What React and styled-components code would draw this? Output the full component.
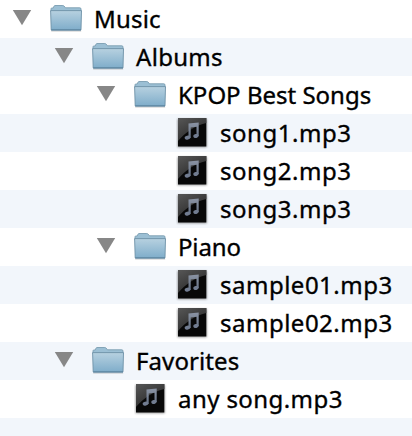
import React from "react";
import styled, { createGlobalStyle } from "styled-components";

const GlobalStyle = createGlobalStyle`
  body { margin: 0; background: #fff; overflow: hidden; }
`;

const Tree = styled.div`
  width: 412px;
  height: 436px;
  overflow: hidden;
  display: flex;
  flex-direction: column;
  font: 24px/38px "Noto Sans", sans-serif;
  color: #000;
`;

const Row = styled.div`
  display: flex;
  align-items: center;
  flex: 0 0 38px;
  box-sizing: border-box;
  padding-left: ${(p) => 12 + p.$depth * 42}px;
  background: #fff;
  &:nth-child(even) { background: #f2f6fb; }
`;

const Toggle = styled.div`
  display: flex;
  width: 38px;
  height: 38px;
`;

const IconSlot = styled.div`
  display: flex;
  width: 44px;
  height: 38px;
`;

const Label = styled.span`
  white-space: pre;
  height: 38px;
  letter-spacing: ${(p) => p.$spacing}px;
  -webkit-text-stroke: 0.35px #000;
`;

const Triangle = () => (
  <svg width="20" height="38" viewBox="0 0 20 38">
    <path d="M.8 10H19.2L10 25.3Z" fill="#878787" />
  </svg>
);

const Folder = () => (
  <svg width="34" height="38" viewBox="0 0 34 38">
    <defs>
      <linearGradient id="folderFront" x1="0" y1="0" x2="0" y2="1">
        <stop offset="0" stopColor="#b7d1e0" />
        <stop offset="1" stopColor="#7fadca" />
      </linearGradient>
    </defs>
    <path d="M1.2 31H31.2" stroke="#000" strokeOpacity=".22" />
    <path d="M1 11V8.7Q1 8 2 8H3.2L4.2 5.9Q4.5 5.5 5 5.5H12.8Q13.5 5.5 14 6L15.5 7.8H29.8Q31 7.8 31 9V12H1Z" fill="#9bbfd4" stroke="#7b9db1" strokeWidth=".9" />
    <path d="M.6 10.6H31.5L31 29.9H1.2Z" fill="url(#folderFront)" stroke="#6d91a7" strokeWidth=".9" />
    <path d="M1.2 30H31" stroke="#557f9b" />
  </svg>
);

const MusicFile = () => (
  <svg width="34" height="38" viewBox="0 0 34 38">
    <defs>
      <linearGradient id="gloss" x1="0" y1="0" x2=".7" y2="1">
        <stop offset="0" stopColor="#575757" />
        <stop offset="1" stopColor="#262626" />
      </linearGradient>
      <linearGradient id="note" x1="0" y1="0" x2="0" y2="1">
        <stop offset="0" stopColor="#8b94a4" />
        <stop offset="1" stopColor="#667184" />
      </linearGradient>
      <filter id="soft"><feGaussianBlur stdDeviation=".8" /></filter>
      <filter id="noteSoft"><feGaussianBlur stdDeviation=".35" /></filter>
    </defs>
    <rect x="1.5" y="5" width="29.3" height="28.3" fill="#000" opacity=".4" filter="url(#soft)" />
    <rect x="2" y="4" width="28.3" height="28.5" fill="#080808" />
    <path d="M2 4H30.3V9C18 12 10 18 2 27Z" fill="url(#gloss)" />
    <g filter="url(#noteSoft)">
      <path d="M12.5 9.6L22.7 8.4V22H20.5V12.8L14.7 13.6V24H12.5Z" fill="url(#note)" />
      <ellipse cx="11.5" cy="23.6" rx="2.9" ry="2" fill="#717c90" transform="rotate(-15 11.5 23.6)" />
      <ellipse cx="20" cy="22" rx="2.7" ry="2" fill="#717c90" transform="rotate(-15 20 22)" />
    </g>
  </svg>
);

const items = [
  { name: "Music", depth: 0, folder: true, spacing: 0.2 },
  { name: "Albums", depth: 1, folder: true, spacing: 0.3 },
  { name: "KPOP Best Songs", depth: 2, folder: true, spacing: 0 },
  { name: "song1.mp3", depth: 3, spacing: 0.55 },
  { name: "song2.mp3", depth: 3, spacing: 0.55 },
  { name: "song3.mp3", depth: 3, spacing: 0.55 },
  { name: "Piano", depth: 2, folder: true, spacing: -0.15 },
  { name: "sample01.mp3", depth: 3, spacing: 0.5 },
  { name: "sample02.mp3", depth: 3, spacing: 0.5 },
  { name: "Favorites", depth: 1, folder: true, spacing: 0.1 },
  { name: "any song.mp3", depth: 2, spacing: 0.42 },
];

export default function App() {
  return (
    <>
      <GlobalStyle />
      <Tree>
        {items.map((item) => (
          <Row key={item.name} $depth={item.depth}>
            <Toggle>{item.folder && <Triangle />}</Toggle>
            <IconSlot>{item.folder ? <Folder /> : <MusicFile />}</IconSlot>
            <Label $spacing={item.spacing}>{item.name}</Label>
          </Row>
        ))}
        <Row $depth={0} />
      </Tree>
    </>
  );
}
